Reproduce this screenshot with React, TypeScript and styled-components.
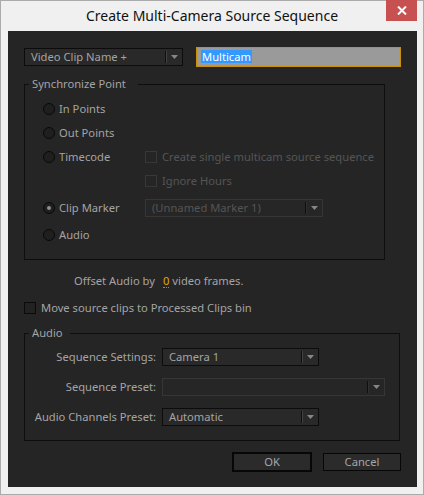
import React from 'react';
import styled, { createGlobalStyle } from 'styled-components';

const FONT = `"Noto Sans", "Open Sans", "DejaVu Sans", sans-serif`;
const TEXT = '#a4a4a4';
const DIM = '#555555';
const SIZE = '11.2px';

const Global = createGlobalStyle`
  html, body { margin: 0; padding: 0; background: #ffffff; }
  body { font-family: ${FONT}; -webkit-font-smoothing: antialiased; }
  * { box-sizing: border-box; }
`;

const Window = styled.div`
  position: relative;
  width: 424px;
  height: 495px;
  border: 1px solid #ababab;
  background: #f0f0f0;
  display: flex;
  flex-direction: column;
`;

const TitleBar = styled.div`
  height: 30px;
  flex: none;
  display: flex;
  align-items: center;
  justify-content: center;
  font-size: 14px;
  color: #111;
  padding-bottom: 1px;
`;

const CloseButton = styled.div`
  position: absolute;
  top: -1px;
  right: 6px;
  width: 31px;
  height: 21px;
  background: #c75050;
  display: flex;
  align-items: center;
  justify-content: center;
`;

const Panel = styled.div`
  flex: 1;
  margin: 0 6px 7px 7px;
  background: #252525;
  padding: 16px 16px 0 16px;
  display: flex;
  flex-direction: column;
  font-size: ${SIZE};
  color: ${TEXT};
`;

const TopRow = styled.div`
  height: 19px;
  display: flex;
  align-items: center;
  justify-content: space-between;
`;

const Select = styled.div<{ $w: number; $disabled?: boolean }>`
  width: ${(p) => p.$w}px;
  height: 18px;
  flex: none;
  display: flex;
  align-items: center;
  border: 1px solid ${(p) => (p.$disabled ? '#363636' : '#0c0c0c')};
  background: ${(p) => (p.$disabled ? '#262626' : '#292929')};
  color: ${(p) => (p.$disabled ? DIM : TEXT)};
`;

const SelectValue = styled.span`
  flex: 1;
  padding-left: 6px;
  white-space: nowrap;
  overflow: hidden;
  line-height: 16px;
`;

const SelectSep = styled.span<{ $disabled?: boolean }>`
  width: 2px;
  height: 12px;
  border-left: 1px solid #0e0e0e;
  border-right: 1px solid ${(p) => (p.$disabled ? '#303030' : '#434343')};
`;

const SelectArrow = styled.span`
  width: 15px;
  display: flex;
  justify-content: center;
  align-items: center;
`;

const TextField = styled.div`
  width: 205px;
  height: 20px;
  border: 1px solid #c8900a;
  background: #9a9a9a;
  display: flex;
  align-items: center;
  padding-left: 4px;
`;

const Selection = styled.span`
  background: #3399ff;
  color: #ffffff;
  line-height: 13px;
  padding: 0 1px;
`;

const Group = styled.fieldset<{ $w: number }>`
  margin: 0;
  width: ${(p) => p.$w}px;
  border: 1px solid #0e0e0e;
  min-width: 0;
`;

const SyncGroup = styled(Group)`
  margin-top: 10px;
  padding: 5px 0 12px 0;
`;

const AudioGroup = styled(Group)`
  margin-top: 9px;
  padding: 1px 0 8px 0;
`;

const Legend = styled.legend<{ $w: number }>`
  width: ${(p) => p.$w}px;
  margin-left: 4px;
  padding: 0 0 0 3px;
  line-height: 16px;
  font-size: ${SIZE};
  color: ${TEXT};
  white-space: nowrap;
`;

const SyncGrid = styled.div`
  display: grid;
  padding-left: 18px;
  grid-template-columns: 102px 1fr;
  grid-template-rows: 24px 24px 24px 24px 30px 24px;
  align-items: center;
`;

const Option = styled.label<{ $disabled?: boolean }>`
  display: flex;
  align-items: center;
  gap: 4px;
  height: 16px;
  line-height: 16px;
  white-space: nowrap;
  color: ${(p) => (p.$disabled ? DIM : TEXT)};
`;

const Radio = styled.span<{ $on?: boolean }>`
  width: 12px;
  height: 12px;
  flex: none;
  border-radius: 50%;
  border: 1px solid #090909;
  background: #1f1f1f;
  display: flex;
  align-items: center;
  justify-content: center;
  &::after {
    content: '';
    width: 4px;
    height: 4px;
    border-radius: 50%;
    background: #8e8e8e;
    display: ${(p) => (p.$on ? 'block' : 'none')};
  }
`;

const Check = styled.span<{ $disabled?: boolean }>`
  width: 12px;
  height: 12px;
  flex: none;
  margin-right: 1px;
  border: 1px solid ${(p) => (p.$disabled ? '#383838' : '#0a0a0a')};
  background: ${(p) => (p.$disabled ? '#252525' : '#222222')};
`;

const OffsetRow = styled.div`
  margin-top: 13px;
  height: 16px;
  padding-left: 50px;
  display: flex;
  align-items: center;
  white-space: nowrap;
  line-height: 16px;
`;

const HotNumber = styled.span`
  color: #e0a800;
  margin: 0 3px 0 8px;
  line-height: 13px;
  border-bottom: 1px dotted #b88a00;
`;

const MoveRow = styled(Option)`
  margin-top: 11px;
`;

const AudioGrid = styled.div`
  display: grid;
  grid-template-columns: 131px auto;
  grid-auto-rows: 30px;
  column-gap: 6px;
  align-items: center;
  justify-items: start;
`;

const FieldLabel = styled.span`
  justify-self: end;
  white-space: nowrap;
  line-height: 16px;
`;

const Buttons = styled.div`
  margin-top: 11px;
  display: flex;
  justify-content: flex-end;
  align-items: center;
  gap: 11px;
`;

const Button = styled.div<{ $default?: boolean }>`
  width: ${(p) => (p.$default ? 80 : 78)}px;
  height: ${(p) => (p.$default ? 20 : 18)}px;
  border: ${(p) => (p.$default ? 2 : 1)}px solid #070707;
  background: #2b2b2b;
  display: flex;
  align-items: center;
  justify-content: center;
  color: #a3a7ac;
  line-height: 16px;
`;

const Arrow = () => (
  <svg width="7" height="4" viewBox="0 0 7 4">
    <path d="M0 0 H7 L3.5 4 Z" fill="#868686" />
  </svg>
);

const Dropdown: React.FC<{ w: number; value?: string; disabled?: boolean }> = ({ w, value, disabled }) => (
  <Select $w={w} $disabled={disabled}>
    <SelectValue>{value}</SelectValue>
    <SelectSep $disabled={disabled} />
    <SelectArrow>
      <Arrow />
    </SelectArrow>
  </Select>
);

export default function App() {
  return (
    <>
      <Global />
      <Window>
        <TitleBar>Create Multi-Camera Source Sequence</TitleBar>
        <CloseButton>
          <svg width="10" height="9" viewBox="0 0 10 9">
            <path d="M1 0.5 L9 8.5 M9 0.5 L1 8.5" stroke="#ffffff" strokeWidth="2" />
          </svg>
        </CloseButton>
        <Panel>
          <TopRow>
            <Dropdown w={159} value="Video Clip Name +" />
            <TextField>
              <Selection>Multicam</Selection>
            </TextField>
          </TopRow>

          <SyncGroup $w={361}>
            <Legend $w={109}>Synchronize Point</Legend>
            <SyncGrid>
              <Option>
                <Radio />
                In Points
              </Option>
              <span />
              <Option>
                <Radio />
                Out Points
              </Option>
              <span />
              <Option>
                <Radio />
                Timecode
              </Option>
              <Option $disabled>
                <Check $disabled />
                Create single multicam source sequence
              </Option>
              <span />
              <Option $disabled>
                <Check $disabled />
                Ignore Hours
              </Option>
              <Option>
                <Radio $on />
                Clip Marker
              </Option>
              <Dropdown w={178} value="(Unnamed Marker 1)" disabled />
              <Option>
                <Radio />
                Audio
              </Option>
              <span />
            </SyncGrid>
          </SyncGroup>

          <OffsetRow>
            Offset Audio by<HotNumber>0</HotNumber>video frames.
          </OffsetRow>

          <MoveRow>
            <Check />
            Move source clips to Processed Clips bin
          </MoveRow>

          <AudioGroup $w={376}>
            <Legend $w={41}>Audio</Legend>
            <AudioGrid>
              <FieldLabel>Sequence Settings:</FieldLabel>
              <Dropdown w={157} value="Camera 1" />
              <FieldLabel>Sequence Preset:</FieldLabel>
              <Dropdown w={223} disabled />
              <FieldLabel>Audio Channels Preset:</FieldLabel>
              <Dropdown w={157} value="Automatic" />
            </AudioGrid>
          </AudioGroup>

          <Buttons>
            <Button $default>OK</Button>
            <Button>Cancel</Button>
          </Buttons>
        </Panel>
      </Window>
    </>
  );
}
